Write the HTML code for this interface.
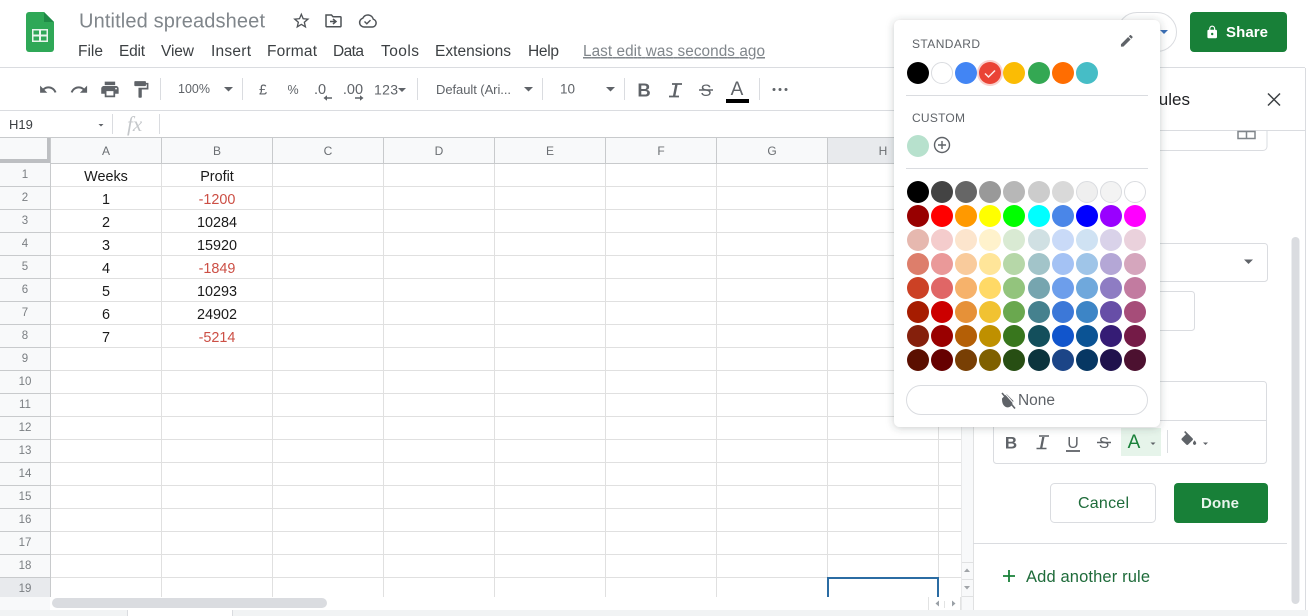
<!DOCTYPE html>
<html><head><meta charset="utf-8"><title>Untitled spreadsheet</title>
<style>
html,body{margin:0;padding:0;background:#fff;width:1308px;height:616px;overflow:hidden}
svg{display:block}
text{font-family:"Liberation Sans",sans-serif}
.m{font-size:15.5px;fill:#3c4043}
.t{fill:#5f6368}
.ch{font-size:12px;fill:#6b6f73;text-anchor:middle}
.rh{font-size:11.5px;fill:#7a7e82;text-anchor:middle}
.c{font-size:14.4px;fill:#1a1a1a;text-anchor:middle}
.r{font-size:14.4px;fill:#cc4f45;text-anchor:middle}
.ic{fill:#5f6368}
.gl{stroke:#e0e0e0;stroke-width:1}
.hl{stroke:#c8cacc;stroke-width:1}
.sp{stroke:#dadce0;stroke-width:1}
</style></head><body>
<svg width="1308" height="616" viewBox="0 0 1308 616" xmlns="http://www.w3.org/2000/svg">
<defs><filter id="sh" x="-10%" y="-10%" width="120%" height="120%"><feDropShadow dx="0" dy="1" stdDeviation="4" flood-color="#3c4043" flood-opacity=".28"/></filter></defs>
<rect width="1308" height="616" fill="#fff"/>

<!-- logo -->
<path d="M29 12h15l10 10v27a3 3 0 0 1-3 3H29a3 3 0 0 1-3-3V15a3 3 0 0 1 3-3z" fill="#2fa857"/>
<path d="M44 12l10 10H44z" fill="#1f8a47"/>
<path d="M32 29h16v13H32zM33.500 30.500v4h5.500v-4zM41 30.500v4h5.500v-4zM33.500 36.500v4h5.500v-4zM41 36.500v4h5.500v-4z" fill="#e8f5ec" fill-rule="evenodd"/>

<!-- title -->
<text x="79" y="27.500" font-size="20" fill="#80868b" textLength="186" lengthAdjust="spacing">Untitled spreadsheet</text>
<path transform="translate(291.500,11) scale(.82)" fill="#4f5357" d="M22 9.240l-7.190-.62L12 2 9.190 8.630 2 9.240l5.460 4.730L5.820 21 12 17.270 18.180 21l-1.630-7.030L22 9.240zM12 15.400l-3.760 2.270 1-4.280-3.320-2.880 4.380-.38L12 6.100l1.710 4.040 4.380.38-3.320 2.880 1 4.280L12 15.400z"/>
<path d="M326 15h5.500l1.500 1.700h7.200a.8.800 0 0 1 .8.800V26a.8.800 0 0 1-.8.800H326.800a.8.800 0 0 1-.8-.8z" fill="none" stroke="#4f5357" stroke-width="1.500"/>
<path d="M330 21.500h5M333 19l3 2.500-3 2.500" fill="none" stroke="#4f5357" stroke-width="1.500"/>
<path d="M364 27h8.500a4 4 0 0 0 .8-7.800 5.600 5.600 0 0 0-10.500-1A4.500 4.500 0 0 0 364 27z" fill="none" stroke="#4f5357" stroke-width="1.500"/>
<path d="M364.500 21.500l2.300 2.300 3.700-3.700" fill="none" stroke="#4f5357" stroke-width="1.400"/>

<!-- menu -->
<text class="m" x="78" y="56" textLength="25">File</text>
<text class="m" x="119" y="56" textLength="26">Edit</text>
<text class="m" x="161" y="56" textLength="33">View</text>
<text class="m" x="211" y="56" textLength="40">Insert</text>
<text class="m" x="267" y="56" textLength="50">Format</text>
<text class="m" x="333" y="56" textLength="31">Data</text>
<text class="m" x="381" y="56" textLength="38">Tools</text>
<text class="m" x="435" y="56" textLength="76">Extensions</text>
<text class="m" x="528" y="56" textLength="31">Help</text>
<text x="583" y="56" font-size="15.300" fill="#80868b" textLength="182" text-decoration="underline">Last edit was seconds ago</text>

<!-- top lines -->
<line x1="0" y1="67.500" x2="1305" y2="67.500" stroke="#dadce0"/>
<line x1="0" y1="110.500" x2="973" y2="110.500" stroke="#dadce0"/>
<line x1="1305.500" y1="68" x2="1305.500" y2="610" stroke="#dadce0"/>

<!-- toolbar icons -->
<path transform="translate(38.500,80) scale(.8)" class="ic" d="M12.500 8c-2.650 0-5.050.99-6.900 2.600L2 7v9h9l-3.620-3.620c1.390-1.160 3.160-1.880 5.120-1.880 3.540 0 6.550 2.310 7.600 5.500l2.370-.78C21.080 11.030 17.150 8 12.500 8z"/>
<path transform="translate(69.500,80) scale(.8)" class="ic" d="M18.400 10.600C16.550 8.990 14.150 8 11.500 8c-4.650 0-8.580 3.030-9.960 7.220L3.900 16c1.050-3.190 4.050-5.500 7.600-5.500 1.950 0 3.730.72 5.120 1.880L13 16h9V7l-3.600 3.600z"/>
<path transform="translate(99.500,79) scale(.87)" class="ic" d="M19 8H5c-1.660 0-3 1.340-3 3v6h4v4h12v-4h4v-6c0-1.660-1.340-3-3-3zm-3 11H8v-5h8v5zm3-7c-.55 0-1-.45-1-1s.45-1 1-1 1 .45 1 1-.45 1-1 1zm-1-9H6v4h12V3z"/>
<path transform="translate(131,79.500) scale(.83)" class="ic" d="M18 4V3c0-.55-.45-1-1-1H5c-.55 0-1 .45-1 1v4c0 .55.45 1 1 1h12c.55 0 1-.45 1-1V6h1v4H9v11c0 .55.45 1 1 1h2c.55 0 1-.45 1-1v-9h8V4h-3z"/>
<line class="sp" x1="160.500" y1="78" x2="160.500" y2="100"/>
<text class="t" font-size="12.500" x="178" y="93" textLength="32">100%</text>
<path class="ic" d="M224 87h9l-4.500 4.500z"/>
<line class="sp" x1="242.500" y1="78" x2="242.500" y2="100"/>
<text x="263" y="94.500" font-size="14.500" fill="#5f6368" text-anchor="middle">£</text>
<text x="293" y="94" font-size="12.500" fill="#5f6368" text-anchor="middle">%</text>
<text x="320" y="94" font-size="14.500" fill="#5f6368" text-anchor="middle">.0</text>
<path class="ic" d="M327 97.200h5v1.600h-5v2l-3.500-2.800 3.500-2.800z"/>
<text x="353" y="94" font-size="14.500" fill="#5f6368" text-anchor="middle">.00</text>
<path class="ic" d="M360 97.200h-5v1.600h5v2l3.500-2.800-3.500-2.800z"/>
<text class="t" font-size="14" x="374" y="94.500" textLength="24">123</text>
<path class="ic" d="M398 88h8l-4 4z"/>
<line class="sp" x1="417.500" y1="78" x2="417.500" y2="100"/>
<text class="t" font-size="13" x="436" y="94" textLength="75">Default (Ari...</text>
<path class="ic" d="M524 87h9l-4.500 4.500z"/>
<line class="sp" x1="542.500" y1="78" x2="542.500" y2="100"/>
<text class="t" font-size="13.500" x="560" y="93.500" textLength="15">10</text>
<path class="ic" d="M606 87h9l-4.500 4.500z"/>
<line class="sp" x1="624.500" y1="78" x2="624.500" y2="100"/>
<text x="644" y="96.500" font-size="18.500" font-weight="700" fill="#5f6368" text-anchor="middle">B</text>
<text x="675" y="96" font-size="17" font-weight="700" font-style="italic" fill="#5f6368" text-anchor="middle">I</text>
<path d="M669 96.500h10M672 84h10" stroke="#5f6368" stroke-width="1.800" fill="none"/>
<text x="706" y="96" font-size="16.500" fill="#5f6368" text-anchor="middle">S</text>
<line x1="699" y1="90" x2="713" y2="90" stroke="#5f6368" stroke-width="1.500"/>
<text x="737" y="95" font-size="19" fill="#5f6368" text-anchor="middle">A</text>
<rect x="726" y="99" width="23" height="4" fill="#000"/>
<line class="sp" x1="759.500" y1="78" x2="759.500" y2="100"/>
<circle class="ic" cx="774" cy="89.500" r="1.500"/><circle class="ic" cx="780" cy="89.500" r="1.500"/><circle class="ic" cx="786" cy="89.500" r="1.500"/>

<!-- formula bar -->
<text x="9" y="129" font-size="13" fill="#3c4043">H19</text>
<path class="ic" d="M98.500 124h5l-2.500 2.500z"/>
<line class="sp" x1="112.500" y1="114" x2="112.500" y2="134"/>
<text x="127" y="131" font-size="21" font-style="italic" fill="#c4c7ca" style="font-family:'Liberation Serif',serif">fx</text>
<line class="sp" x1="159.500" y1="114" x2="159.500" y2="134"/>

<!-- grid headers -->
<rect x="0" y="138" width="961" height="25" fill="#f8f9fa"/>
<rect x="0" y="163" width="50.500" height="434" fill="#f8f9fa"/>
<rect x="828" y="138" width="111" height="25" fill="#e8eaed"/>
<rect x="0" y="578" width="50.500" height="19" fill="#e8eaed"/>
<rect x="47" y="138" width="4" height="25" fill="#bdbfc2"/>
<rect x="0" y="159" width="51" height="4" fill="#bdbfc2"/>
<line class="hl" x1="0" y1="137.500" x2="961" y2="137.500"/>
<line class="hl" x1="50" y1="163.500" x2="961" y2="163.500"/>

<!-- row lines -->
<path class="gl" fill="none" d="M51 186.500H961M51 209.500H961M51 232.500H961M51 255.500H961M51 278.500H961M51 301.500H961M51 324.500H961M51 347.500H961M51 370.500H961M51 393.500H961M51 416.500H961M51 439.500H961M51 462.500H961M51 485.500H961M51 508.500H961M51 531.500H961M51 554.500H961M51 577.500H961"/>
<path class="hl" fill="none" d="M0 186.500H50M0 209.500H50M0 232.500H50M0 255.500H50M0 278.500H50M0 301.500H50M0 324.500H50M0 347.500H50M0 370.500H50M0 393.500H50M0 416.500H50M0 439.500H50M0 462.500H50M0 485.500H50M0 508.500H50M0 531.500H50M0 554.500H50M0 577.500H50M50.500 138V597M161.500 138V163M272.500 138V163M383.500 138V163M494.500 138V163M605.500 138V163M716.500 138V163M827.500 138V163M938.500 138V163"/>
<path class="gl" fill="none" d="M161.500 164V597M272.500 164V597M383.500 164V597M494.500 164V597M605.500 164V597M716.500 164V597M827.500 164V597M938.500 164V597"/>

<!-- col labels -->
<text class="ch" x="106" y="155">A</text><text class="ch" x="217" y="155">B</text><text class="ch" x="328" y="155">C</text><text class="ch" x="439" y="155">D</text><text class="ch" x="550" y="155">E</text><text class="ch" x="661" y="155">F</text><text class="ch" x="772" y="155">G</text><text class="ch" x="883" y="155">H</text>

<!-- row labels -->
<text class="rh" x="25" y="178">1</text><text class="rh" x="25" y="201">2</text><text class="rh" x="25" y="224">3</text><text class="rh" x="25" y="247">4</text><text class="rh" x="25" y="270">5</text><text class="rh" x="25" y="293">6</text><text class="rh" x="25" y="316">7</text><text class="rh" x="25" y="339">8</text><text class="rh" x="25" y="362">9</text><text class="rh" x="25" y="385">10</text><text class="rh" x="25" y="408">11</text><text class="rh" x="25" y="431">12</text><text class="rh" x="25" y="454">13</text><text class="rh" x="25" y="477">14</text><text class="rh" x="25" y="500">15</text><text class="rh" x="25" y="523">16</text><text class="rh" x="25" y="546">17</text><text class="rh" x="25" y="569">18</text><text class="rh" x="25" y="592">19</text>

<!-- cells -->
<text class="c" x="106" y="181">Weeks</text><text class="c" x="217" y="181">Profit</text>
<text class="c" x="106" y="204">1</text><text class="r" x="217" y="204">-1200</text>
<text class="c" x="106" y="227">2</text><text class="c" x="217" y="227">10284</text>
<text class="c" x="106" y="250">3</text><text class="c" x="217" y="250">15920</text>
<text class="c" x="106" y="273">4</text><text class="r" x="217" y="273">-1849</text>
<text class="c" x="106" y="296">5</text><text class="c" x="217" y="296">10293</text>
<text class="c" x="106" y="319">6</text><text class="c" x="217" y="319">24902</text>
<text class="c" x="106" y="342">7</text><text class="r" x="217" y="342">-5214</text>

<!-- selection -->
<path d="M828 597V578H938V597" fill="none" stroke="#2b6ca3" stroke-width="2"/>

<!-- horizontal scroll -->
<rect x="0" y="597" width="973" height="13" fill="#fff"/>
<rect x="0" y="597" width="50" height="13" fill="#f8f9fa"/>
<rect x="52" y="598" width="275" height="10" rx="5" fill="#dadce0"/>
<path d="M928.500 597V610M944.500 601V608M960.500 597V610" stroke="#e2e3e3" fill="none"/>
<path d="M939 600.500v6l-3.500-3zM952 600.500v6l3.500-3z" fill="#9aa0a6"/>

<!-- vertical scroll strip -->
<rect x="961" y="163" width="12" height="447" fill="#f8f9fa"/>
<line x1="961.500" y1="138" x2="961.500" y2="610" stroke="#e8e9ea"/>
<path d="M962 562.500H973M962 579.500H973M962 596.500H973" stroke="#e0e1e2" fill="none"/>
<path d="M964 572h6l-3-3.500zM964 586h6l-3 3.500z" fill="#a0a4a8"/>

<!-- bottom bar -->
<rect x="0" y="610" width="1308" height="6" fill="#f1f3f4"/>
<rect x="127" y="610" width="106" height="6" fill="#fff"/>
<path d="M127.500 610V616M232.500 610V616" stroke="#dadce0"/>

<!-- avatar pill and share -->
<rect x="1117.500" y="12.500" width="59" height="39" rx="19.500" fill="#fff" stroke="#dadce0"/>
<path d="M1160 30h8l-4 4z" fill="#3b6fb6"/>
<rect x="1190" y="12" width="97" height="40" rx="4" fill="#188038"/>
<path transform="translate(1205,25) scale(.6)" fill="#fff" d="M18 8h-1V6c0-2.760-2.240-5-5-5S7 3.240 7 6v2H6c-1.100 0-2 .9-2 2v10c0 1.100.9 2 2 2h12c1.100 0 2-.9 2-2V10c0-1.100-.9-2-2-2zm-6 9c-1.100 0-2-.9-2-2s.9-2 2-2 2 .9 2 2-.9 2-2 2zm3.100-9H8.900V6c0-1.710 1.390-3.100 3.100-3.100 1.710 0 3.100 1.390 3.100 3.100v2z"/>
<text x="1226" y="37" font-size="15" font-weight="700" fill="#fff" textLength="42">Share</text>

<!-- side panel -->
<rect x="973" y="68" width="332" height="542" fill="#fff"/>
<line x1="973.500" y1="68" x2="973.500" y2="610" stroke="#e0e1e2"/>
<text x="1190" y="105" font-size="17" fill="#202124" text-anchor="end">Conditional format rules</text>
<path d="M1268 93.500l12 12M1280 93.500l-12 12" stroke="#3c4043" stroke-width="1.500" fill="none"/>
<line x1="973" y1="130.500" x2="1305" y2="130.500" stroke="#dadce0"/>
<path d="M993 150.500H1263a4 4 0 0 0 4-4V131" fill="none" stroke="#dadce0"/>
<path d="M1238 131.500h17v7h-17zM1246.500 131.500v7" fill="none" stroke="#80868b" stroke-width="1.500"/>
<rect x="993.500" y="243.500" width="274" height="38" rx="3" fill="#fff" stroke="#dadce0"/>
<path d="M1244 259.500h9l-4.500 4.500z" fill="#5f6368"/>
<rect x="993.500" y="291.500" width="201" height="39" rx="3" fill="#fff" stroke="#dadce0"/>
<rect x="993.500" y="381.500" width="273" height="82" rx="3" fill="#fff" stroke="#dadce0"/>
<line x1="993" y1="420.500" x2="1267" y2="420.500" stroke="#dadce0"/>
<text x="1011" y="448.500" font-size="17" font-weight="700" fill="#5f6368" text-anchor="middle">B</text>
<text x="1042" y="448" font-size="16" font-weight="700" font-style="italic" fill="#5f6368" text-anchor="middle">I</text>
<path d="M1036.500 448.500h10M1039 436h10" stroke="#5f6368" stroke-width="1.600" fill="none"/>
<text x="1073" y="448" font-size="16" fill="#5f6368" text-anchor="middle">U</text>
<line x1="1066" y1="451" x2="1080" y2="451" stroke="#5f6368" stroke-width="1.800"/>
<text x="1104" y="448" font-size="15.500" fill="#5f6368" text-anchor="middle">S</text>
<line x1="1097" y1="442.500" x2="1111" y2="442.500" stroke="#5f6368" stroke-width="1.500"/>
<rect x="1121" y="428" width="40" height="28" fill="#e6f4ea"/>
<text x="1134" y="448" font-size="19" fill="#188038" text-anchor="middle">A</text>
<path d="M1150.500 442.500h5l-2.500 2.500z" fill="#5f6368"/>
<line x1="1167.500" y1="430" x2="1167.500" y2="453" stroke="#dadce0"/>
<path transform="translate(1179,431) scale(.82)" fill="#5f6368" d="M16.560 8.940L7.620 0 6.210 1.410l2.380 2.380-5.150 5.150c-.59.59-.59 1.540 0 2.120l5.500 5.500c.29.29.68.44 1.060.44s.77-.15 1.060-.44l5.500-5.500c.59-.58.59-1.530 0-2.120zM19 11.500s-2 2.170-2 3.500c0 1.100.9 2 2 2s2-.9 2-2c0-1.330-2-3.500-2-3.500z"/>
<path d="M1203 442.500h5l-2.500 2.500z" fill="#5f6368"/>
<rect x="1050.500" y="483.500" width="105" height="39" rx="4" fill="#fff" stroke="#dadce0"/>
<text x="1078" y="508" font-size="16" fill="#1e6b3a" textLength="51" lengthAdjust="spacing">Cancel</text>
<rect x="1174" y="483" width="94" height="40" rx="4" fill="#188038"/>
<text x="1201" y="508" font-size="15" font-weight="700" fill="#e8f5ec" textLength="38">Done</text>
<line x1="973" y1="543.500" x2="1287" y2="543.500" stroke="#dadce0"/>
<path d="M1009 570v12M1003 576h12" stroke="#188038" stroke-width="1.800" fill="none"/>
<text x="1026" y="582" font-size="16.500" fill="#1e6b3a" textLength="124" lengthAdjust="spacing">Add another rule</text>
<rect x="1291.500" y="237" width="8" height="367" rx="4" fill="#dadce0"/>

<!-- popup -->
<rect x="894" y="20" width="266" height="407" rx="6" fill="#fff" filter="url(#sh)"/>
<text x="912" y="48" font-size="12" fill="#5f6368" textLength="68" lengthAdjust="spacing">STANDARD</text>
<path transform="translate(1119,33) scale(.65)" fill="#5f6368" d="M3 17.250V21h3.750L17.810 9.940l-3.750-3.750L3 17.250zM20.710 7.040c.39-.39.39-1.020 0-1.410l-2.340-2.340c-.39-.39-1.020-.39-1.410 0l-1.830 1.830 3.750 3.750 1.830-1.830z"/>
<circle cx="918" cy="73" r="11" fill="#000"/>
<circle cx="942" cy="73" r="10.500" fill="#fff" stroke="#dadce0"/>
<circle cx="966" cy="73" r="11" fill="#4285f4"/>
<circle cx="990" cy="73" r="13" fill="#ea4335" opacity=".25"/>
<circle cx="990" cy="73" r="11" fill="#ea4335"/>
<path d="M985 73.500l3.500 3.500 6.500-6.500" fill="none" stroke="#fde8e6" stroke-width="1.500"/>
<circle cx="1014" cy="73" r="11" fill="#fbbc04"/>
<circle cx="1039" cy="73" r="11" fill="#34a853"/>
<circle cx="1063" cy="73" r="11" fill="#ff6d01"/>
<circle cx="1087" cy="73" r="11" fill="#46bdc6"/>
<line x1="906" y1="95.500" x2="1148" y2="95.500" stroke="#dadce0"/>
<text x="912" y="122" font-size="12" fill="#5f6368" textLength="53" lengthAdjust="spacing">CUSTOM</text>
<circle cx="918" cy="146" r="11" fill="#b7e1cd"/>
<circle cx="942" cy="145" r="7.500" fill="none" stroke="#5f6368" stroke-width="1.400"/>
<path d="M942 141v8M938 145h8" stroke="#5f6368" stroke-width="1.400"/>
<line x1="906" y1="168.500" x2="1148" y2="168.500" stroke="#dadce0"/>

<g>
<circle cx="918" cy="192" r="11" fill="#000"/><circle cx="942" cy="192" r="11" fill="#434343"/><circle cx="966" cy="192" r="11" fill="#666"/><circle cx="990" cy="192" r="11" fill="#999"/><circle cx="1014" cy="192" r="11" fill="#b7b7b7"/><circle cx="1039" cy="192" r="11" fill="#ccc"/><circle cx="1063" cy="192" r="11" fill="#d9d9d9"/><circle cx="1087" cy="192" r="10.500" fill="#efefef" stroke="#dadce0"/><circle cx="1111" cy="192" r="10.500" fill="#f3f3f3" stroke="#dadce0"/><circle cx="1135" cy="192" r="10.500" fill="#fff" stroke="#dadce0"/>
<circle cx="918" cy="216" r="11" fill="#980000"/><circle cx="942" cy="216" r="11" fill="#f00"/><circle cx="966" cy="216" r="11" fill="#f90"/><circle cx="990" cy="216" r="11" fill="#ff0"/><circle cx="1014" cy="216" r="11" fill="#0f0"/><circle cx="1039" cy="216" r="11" fill="#0ff"/><circle cx="1063" cy="216" r="11" fill="#4a86e8"/><circle cx="1087" cy="216" r="11" fill="#00f"/><circle cx="1111" cy="216" r="11" fill="#90f"/><circle cx="1135" cy="216" r="11" fill="#f0f"/>
<circle cx="918" cy="240" r="11" fill="#e6b8af"/><circle cx="942" cy="240" r="11" fill="#f4cccc"/><circle cx="966" cy="240" r="11" fill="#fce5cd"/><circle cx="990" cy="240" r="11" fill="#fff2cc"/><circle cx="1014" cy="240" r="11" fill="#d9ead3"/><circle cx="1039" cy="240" r="11" fill="#d0e0e3"/><circle cx="1063" cy="240" r="11" fill="#c9daf8"/><circle cx="1087" cy="240" r="11" fill="#cfe2f3"/><circle cx="1111" cy="240" r="11" fill="#d9d2e9"/><circle cx="1135" cy="240" r="11" fill="#ead1dc"/>
<circle cx="918" cy="264" r="11" fill="#dd7e6b"/><circle cx="942" cy="264" r="11" fill="#ea9999"/><circle cx="966" cy="264" r="11" fill="#f9cb9c"/><circle cx="990" cy="264" r="11" fill="#ffe599"/><circle cx="1014" cy="264" r="11" fill="#b6d7a8"/><circle cx="1039" cy="264" r="11" fill="#a2c4c9"/><circle cx="1063" cy="264" r="11" fill="#a4c2f4"/><circle cx="1087" cy="264" r="11" fill="#9fc5e8"/><circle cx="1111" cy="264" r="11" fill="#b4a7d6"/><circle cx="1135" cy="264" r="11" fill="#d5a6bd"/>
<circle cx="918" cy="288" r="11" fill="#cc4125"/><circle cx="942" cy="288" r="11" fill="#e06666"/><circle cx="966" cy="288" r="11" fill="#f6b26b"/><circle cx="990" cy="288" r="11" fill="#ffd966"/><circle cx="1014" cy="288" r="11" fill="#93c47d"/><circle cx="1039" cy="288" r="11" fill="#76a5af"/><circle cx="1063" cy="288" r="11" fill="#6d9eeb"/><circle cx="1087" cy="288" r="11" fill="#6fa8dc"/><circle cx="1111" cy="288" r="11" fill="#8e7cc3"/><circle cx="1135" cy="288" r="11" fill="#c27ba0"/>
<circle cx="918" cy="312" r="11" fill="#a61c00"/><circle cx="942" cy="312" r="11" fill="#c00"/><circle cx="966" cy="312" r="11" fill="#e69138"/><circle cx="990" cy="312" r="11" fill="#f1c232"/><circle cx="1014" cy="312" r="11" fill="#6aa84f"/><circle cx="1039" cy="312" r="11" fill="#45818e"/><circle cx="1063" cy="312" r="11" fill="#3c78d8"/><circle cx="1087" cy="312" r="11" fill="#3d85c6"/><circle cx="1111" cy="312" r="11" fill="#674ea7"/><circle cx="1135" cy="312" r="11" fill="#a64d79"/>
<circle cx="918" cy="336" r="11" fill="#85200c"/><circle cx="942" cy="336" r="11" fill="#900"/><circle cx="966" cy="336" r="11" fill="#b45f06"/><circle cx="990" cy="336" r="11" fill="#bf9000"/><circle cx="1014" cy="336" r="11" fill="#38761d"/><circle cx="1039" cy="336" r="11" fill="#134f5c"/><circle cx="1063" cy="336" r="11" fill="#1155cc"/><circle cx="1087" cy="336" r="11" fill="#0b5394"/><circle cx="1111" cy="336" r="11" fill="#351c75"/><circle cx="1135" cy="336" r="11" fill="#741b47"/>
<circle cx="918" cy="360" r="11" fill="#5b0f00"/><circle cx="942" cy="360" r="11" fill="#660000"/><circle cx="966" cy="360" r="11" fill="#783f04"/><circle cx="990" cy="360" r="11" fill="#7f6000"/><circle cx="1014" cy="360" r="11" fill="#274e13"/><circle cx="1039" cy="360" r="11" fill="#0c343d"/><circle cx="1063" cy="360" r="11" fill="#1c4587"/><circle cx="1087" cy="360" r="11" fill="#073763"/><circle cx="1111" cy="360" r="11" fill="#20124d"/><circle cx="1135" cy="360" r="11" fill="#4c1130"/>
</g>

<rect x="906.500" y="385.500" width="241" height="29" rx="14.500" fill="#fff" stroke="#dadce0"/>
<path d="M1002 398.500l4.500-4.500 7 7-2 4.500c-1.500 2-4.500 2.500-6.500 1s-3-3.500-3-8z" fill="#5f6368"/>
<path d="M1002 393l13 15.500" stroke="#5f6368" stroke-width="1.600"/>
<path d="M1005 393.500l10 11.500" stroke="#fff" stroke-width="1"/>
<text x="1018" y="405" font-size="15.500" fill="#5f6368" textLength="37" lengthAdjust="spacing">None</text>
</svg>
</body></html>
